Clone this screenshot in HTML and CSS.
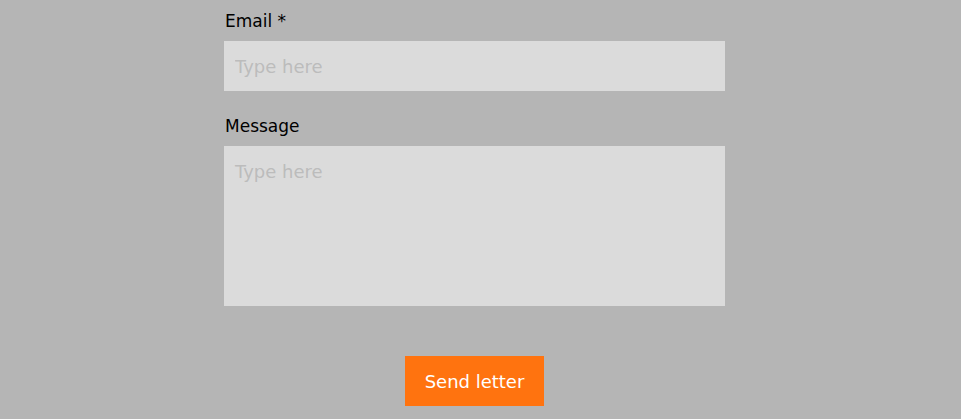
FILE: index.html
```html
<!DOCTYPE html>
<html>
<head>
<meta charset="utf-8">
<link rel="stylesheet" href="styles.css">
</head>
<body>
<div class="page">
  <form class="form">
    <label class="label" for="email">Email *</label>
    <input class="field" id="email" type="text" placeholder="Type here">
    <label class="label label-msg" for="msg">Message</label>
    <textarea class="field area" id="msg" placeholder="Type here"></textarea>
    <div class="actions">
      <button class="btn" type="button">Send letter</button>
    </div>
  </form>
</div>
</body>
</html>
```
FILE: styles.css
```css
html, body {
  margin: 0;
  padding: 0;
  background: #b5b5b5;
  height: 100%;
}
.page {
  padding-left: 224px;
  padding-top: 11px;
}
.form {
  width: 501px;
  display: flex;
  flex-direction: column;
  font-family: "DejaVu Sans", sans-serif;
}
.label {
  display: block;
  font-size: 17px;
  line-height: 21px;
  color: #000;
  margin: 0 0 9px 1px;
}
.label-msg {
  margin-top: 25px;
}
.field {
  box-sizing: border-box;
  width: 501px;
  height: 50px;
  border: 0;
  outline: 0;
  background: #dbdbdb;
  padding: 0 11px;
  font-family: inherit;
  font-size: 18px;
  color: #333;
  margin: 0;
  display: block;
}
.field::placeholder {
  color: #bcbcbc;
}
.area {
  height: 160px;
  padding-top: 15px;
  resize: none;
}
.actions {
  display: flex;
  justify-content: center;
  margin-top: 50px;
}
.btn {
  width: 139px;
  height: 50px;
  border: 0;
  background: #ff730f;
  color: #fff;
  font-family: inherit;
  font-size: 18px;
  padding: 0;
  cursor: pointer;
}
```
